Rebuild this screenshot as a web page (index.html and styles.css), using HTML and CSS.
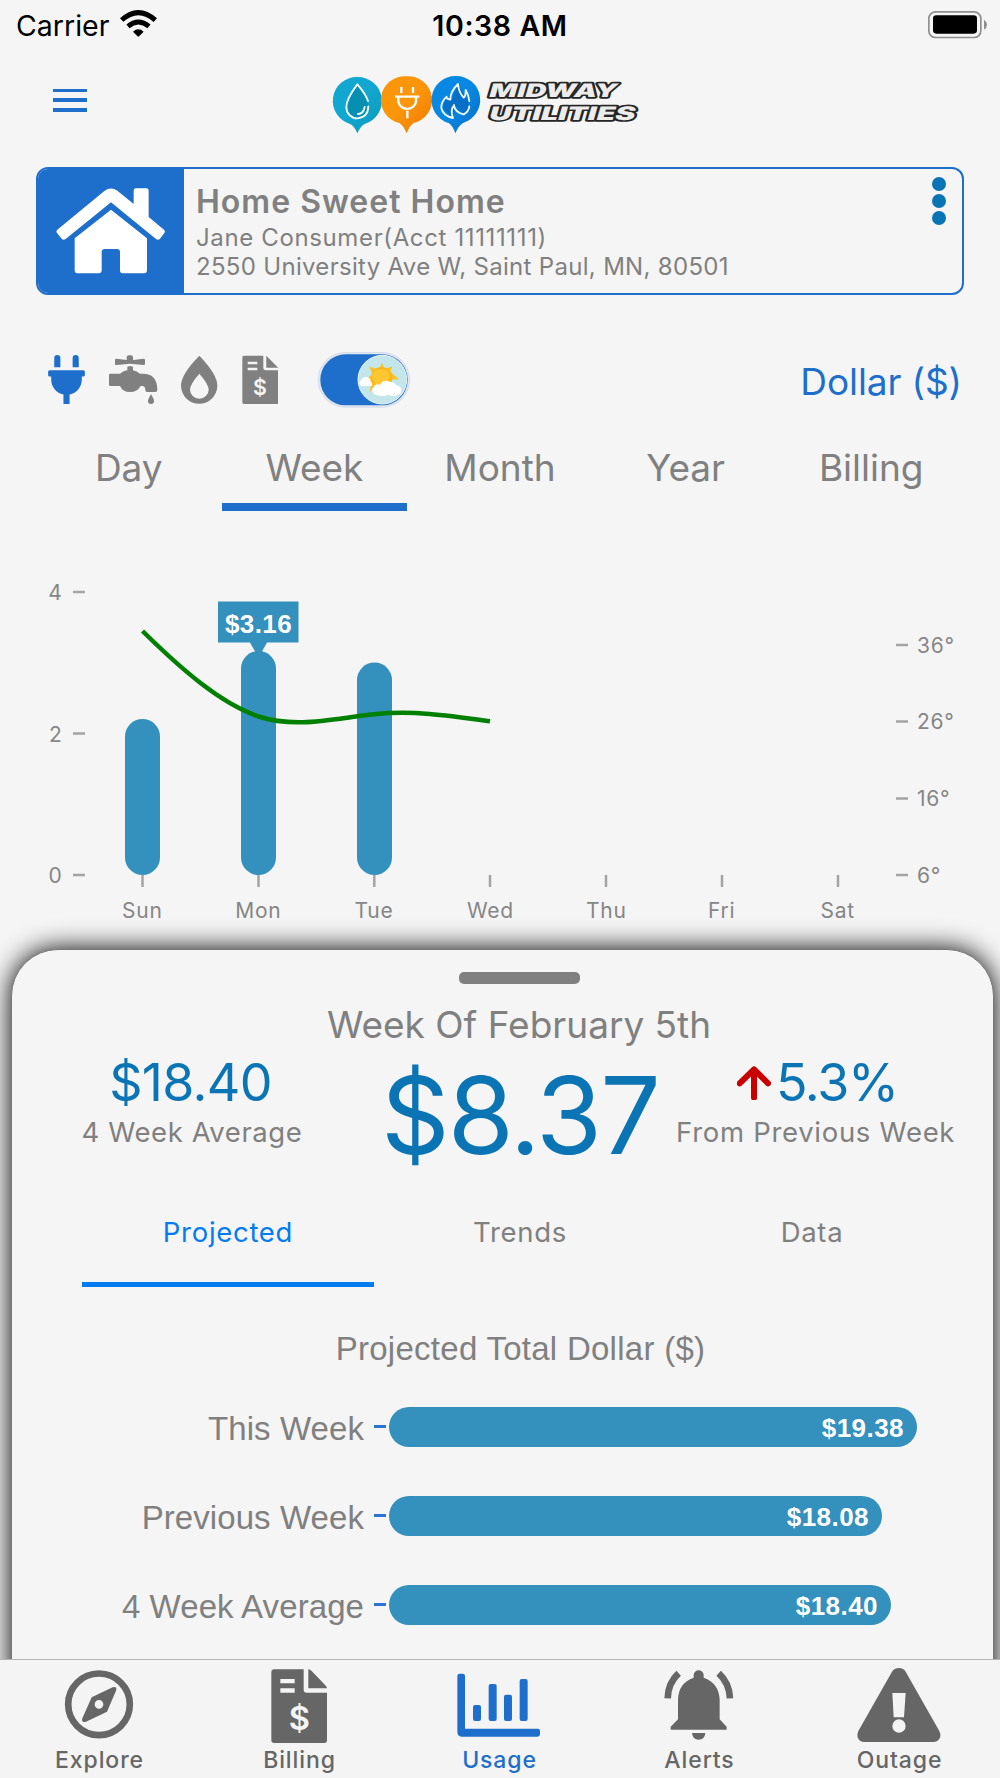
FILE: index.html
```html
<!DOCTYPE html>
<html lang="en">
<head>
<meta charset="utf-8">
<title>Usage</title>
<link rel="stylesheet" href="styles.css">
</head>
<body>
<div class="status">
  <div class="status-left"><span class="carrier">Carrier</span>
    <svg class="wifi" viewBox="360 28 112 86"><g fill="none" stroke="#000" stroke-width="15"><path d="M365 61Q415 16 466 61"/><path d="M384 80Q415 54 447 80"/></g><path d="M399 96Q415 82 431 96L418 109Q415 112 412 109Z"/></svg>
  </div>
  <span class="time">10:38 AM</span>
  <svg class="battery" viewBox="1284 32 180 84"><rect x="1286.500" y="34.500" width="156" height="77" rx="20" fill="none" stroke="#8e8e8e" stroke-width="5"/><rect x="1299" y="45" width="132" height="55" rx="10"/><path d="M1452 58Q1461 64 1461 73T1452 88Z" fill="#8e8e8e"/></svg>
</div>

<header class="header">
  <div class="burger"><i></i><i></i><i></i></div>
  <svg class="logo" viewBox="0 0 990 225">
    <defs>
      <linearGradient id="water" x1="0" y1="0" x2="1" y2="1"><stop offset=".5" stop-color="#12a7d0"/><stop offset="1" stop-color="#0a98b8"/></linearGradient>
      <linearGradient id="power" x1="0" y1="0" x2="1" y2="1"><stop offset=".5" stop-color="#fb950a"/><stop offset="1" stop-color="#f07800"/></linearGradient>
      <linearGradient id="gas" x1="0" y1="0" x2="1" y2="1"><stop offset=".5" stop-color="#0888e2"/><stop offset="1" stop-color="#056dc4"/></linearGradient>
    </defs>
    <path fill="url(#water)" d="M112 36A72 72 0 0 1 134 177Q122 183 112 205Q103 183 90 177A72 72 0 0 1 112 36Z"/>
    <path fill="url(#power)" d="M260 34A71 71 0 0 1 281 174Q270 180 260 205Q249 180 238 174A71 71 0 0 1 260 34Z"/>
    <path fill="url(#gas)" d="M407 33A72 72 0 0 1 429 174Q417 180 406 205Q397 180 386 174A72 72 0 0 1 407 33Z"/>
    <path fill="#078fb1" d="M112 60Q146 108 146 128L128 160H100Q80 150 80 126Q82 100 112 60Z"/>
    <path fill="#0670c8" d="M414 58L444 108L448 130L430 148L407 124L398 158L368 130L378 95L395 104Z"/>
    <g fill="none" stroke="#f0fafa" stroke-width="5.500" stroke-linecap="round" stroke-linejoin="round">
      <path d="M144 108Q138 88 112 58Q79 102 79 126A33 33 0 0 0 112 160Q144 158 145 124M114 147Q131 146 134 126"/>
      <path d="M448 108Q447 92 437 75Q438 93 431 98Q416 82 414 57Q390 80 391 104Q378 102 380 95Q362 112 364 130Q370 154 399 159Q390 136 402 120Q404 142 431 148Q446 140 448 124"/>
    </g>
    <path fill="none" stroke="#fff" stroke-width="7" d="M244 66V84M279 66V84M225 95H298M235 98V110A27 27 0 0 0 288 110V98M262 137V160"/>
    <g class="wordmark"><text transform="translate(504 95) skewX(-16)" textLength="383" lengthAdjust="spacingAndGlyphs">MIDWAY</text><text transform="translate(504 164) skewX(-16)" textLength="438" lengthAdjust="spacingAndGlyphs">UTILITIES</text></g>
  </svg>
</header>

<section class="account">
  <div class="account-icon">
    <svg class="house" viewBox="165 562 336 264" fill="#fff"><path d="M172 690L314 573Q333 560 352 573L401 613V573Q401 566 408 566H439Q446 566 446 573V652L492 690Q497 695 493 700L480 717Q475 723 468 718L333 608L197 718Q190 723 185 717L171 700Q167 695 172 690Z"/><path d="M333 630L441 716V812Q441 821 432 821H368Q360 821 360 812V757Q360 748 351 748H314Q305 748 305 757V812Q305 821 296 821H232Q224 821 224 812V716Z"/></svg>
  </div>
  <div class="account-text">
    <div class="acc-name">Home Sweet Home</div>
    <div class="acc-line acc-owner">Jane Consumer(Acct 11111111)</div>
    <div class="acc-line acc-address">2550 University Ave W, Saint Paul, MN, 80501</div>
  </div>
  <div class="kebab"><i></i><i></i><i></i></div>
</section>

<div class="tools">
  <svg class="tool plug" viewBox="0 0 384 512"><path d="M320,32a32,32,0,0,0-64,0v96h64Zm48,128H16A16,16,0,0,0,0,176v32a16,16,0,0,0,16,16H32v32A160.07,160.07,0,0,0,160,412.800V512h64V412.800A160.070,160.070,0,0,0,352,256V224h16a16,16,0,0,0,16-16V176A16,16,0,0,0,368,160ZM128,32a32,32,0,0,0-64,0v96h64Z"/></svg>
  <svg class="tool faucet" viewBox="237 45 147 147"><path d="M259 56L290 60V52Q290 46 296 46H303Q309 46 309 52V60L341 56Q345 56 345 60V71Q345 75 341 75L300 71L259 75Q255 75 255 71V60Q255 56 259 56ZM241 101H270Q280 92 292 91V80L300 78L309 80V91Q320 93 330 101H342Q382 103 382 150Q382 156 376 156H351Q346 156 346 150Q346 138 336 138H332Q322 156 300 156Q278 156 270 138H241Q237 138 237 134V105Q237 101 241 101ZM363 163Q372 177 372 183A9 9 0 0 1 354 183Q354 177 363 163Z"/></svg>
  <svg class="tool flame" viewBox="453 45 110 147"><path fill-rule="evenodd" d="M508 47Q562 103 562 137A54.500 54.500 0 0 1 453 137Q453 103 508 47ZM508 101Q480 133 480 149A28 27 0 0 0 536 149Q536 133 508 101Z"/></svg>
  <svg class="tool bill" viewBox="635 45 109 147"><path d="M641 47H699V84Q699 91 706 91H744V187Q744 192 739 192H641Q636 192 636 187V52Q636 47 641 47ZM708 47L744 83H708Z"/><path fill="#f4f4f4" d="M652 65H681V73H652ZM652 83H681V91H652Z"/><text class="bill-sign" x="689" y="165" font-size="64">$</text></svg>
  <svg class="toggle" viewBox="860 38 282 168">
    <rect x="863" y="39.500" width="275" height="164" rx="82" fill="#e4e6ea" stroke="#b9cfea" stroke-width="1.500"/>
    <rect x="870" y="45" width="262" height="153" rx="76" fill="#1d6fcb"/>
    <circle cx="1056" cy="121" r="73" fill="#c2e6ea" stroke="#eef3f6" stroke-width="3"/>
    <path fill="#f8c32a" d="M1055 70L1063 90L1086 81L1080 97L1106 120L1082 121L1090 140L1028 145L1017 160L1022 138L1003 120L1027 106L1017 82L1045 90Z"/>
    <circle cx="1054" cy="115" r="32" fill="#f8b81c"/><path fill="#fcc72f" d="M1028 98Q1058 78 1077 101Q1076 124 1074 138H1040Q1020 120 1028 98Z"/>
    <path fill="#fff" d="M995 140A9 9 0 0 1 992 123Q1000 108 1013 114Q1022 118 1021 128Q1028 130 1024 140ZM1036 166A14 14 0 0 1 1030 143Q1034 132 1048 136Q1061 118 1080 128Q1092 127 1098 138Q1112 139 1113 152Q1114 167 1100 168Q1085 173 1075 166Q1055 174 1036 166Z"/>
  </svg>
  <span class="unit">Dollar ($)</span>
</div>

<nav class="ranges">
  <span class="range">Day</span><span class="range active">Week</span><span class="range">Month</span><span class="range">Year</span><span class="range">Billing</span>
</nav>

<svg class="chart" viewBox="0 520 1000 429">
  <g stroke="#a4a4a4" stroke-width="2.500"><path d="M73 592H85M73 733.500H85M73 875H85M896 645H908M896 721.500H908M896 798.500H908M896 875H908M142.500 875V887M258.500 875V887M374.300 875V887M490 875V887M606 875V887M722 875V887M838 875V887"/></g>
  <g fill="#3490bd"><rect x="125" y="719" width="35" height="156" rx="17.500"/><rect x="241" y="651" width="35" height="224" rx="17.500"/><rect x="357" y="662.500" width="35" height="212.500" rx="17.500"/><path d="M218 601.500H298.500V642.500H267L260 655H257L250 642.500H218Z"/></g>
  <path fill="none" stroke="#008000" stroke-width="4.500" d="M142.500 631C181 669 220 703 258.500 716.500C297 729 336 718 374.300 714.300C413 710 452 716 490 721.300"/>
  <text class="tip" x="258.500" y="632.500">$3.16</text>
  <g class="axis">
    <g text-anchor="end"><text x="62.500" y="600">4</text><text x="62.500" y="741.500">2</text><text x="62.500" y="883">0</text></g>
    <text x="917" y="652.500">36°</text><text x="917" y="729">26°</text><text x="917" y="806">16°</text><text x="917" y="882.500">6°</text>
    <g text-anchor="middle"><text x="142.300" y="917.700">Sun</text><text x="258.300" y="917.700">Mon</text><text x="374" y="917.700">Tue</text><text x="490.300" y="917.700">Wed</text><text x="606.300" y="917.700">Thu</text><text x="721.700" y="917.700">Fri</text><text x="837.700" y="917.700">Sat</text></g>
  </g>
</svg>

<section class="sheet">
  <div class="handle"></div>
  <h2 class="sheet-title">Week Of February 5th</h2>
  <div class="stats">
    <div class="stat"><div class="stat-value avg">$18.40</div><div class="stat-label">4 Week Average</div></div>
    <div class="stat-big">$8.37</div>
    <div class="stat"><div class="stat-value change"><svg class="arrow" viewBox="710 433 101 104"><path d="M761 528V446M718 485L761 443L803 485" fill="none" stroke="#c80000" stroke-width="18" stroke-linecap="round" stroke-linejoin="round"/></svg><span class="pct">5.3%</span></div><div class="stat-label prev">From Previous Week</div></div>
  </div>
  <nav class="tabs"><span class="tab on">Projected</span><span class="tab">Trends</span><span class="tab">Data</span></nav>
  <h3 class="proj-title">Projected Total Dollar ($)</h3>
  <div class="bars">
    <div class="bar-row"><span class="bar-name">This Week</span><i class="tick"></i><div class="bar" style="width:528px">$19.38</div></div>
    <div class="bar-row"><span class="bar-name">Previous Week</span><i class="tick"></i><div class="bar" style="width:493px">$18.08</div></div>
    <div class="bar-row"><span class="bar-name">4 Week Average</span><i class="tick"></i><div class="bar" style="width:502px">$18.40</div></div>
  </div>
</section>

<footer class="tabbar">
  <div class="item"><svg viewBox="150 63 300 250"><circle cx="297" cy="193" r="92.500" fill="none" stroke="#666" stroke-width="20"/><path fill="#666" fill-rule="evenodd" d="M275 172L338 142Q353 138 348 152L321 215L258 245Q243 249 247 235ZM297 180A13 13 0 1 0 297 206A13 13 0 1 0 297 180Z"/></svg><span>Explore</span></div>
  <div class="item"><svg viewBox="750 63 300 250"><path fill="#666" d="M823 88H911V149Q911 158 920 158H981V301Q981 309 973 309H823Q814 309 814 301V96Q814 88 823 88ZM925 88Q931 88 935 93L976 136Q981 140 981 145H925Z"/><path fill="#f4f4f4" d="M841 117H884V130H841ZM841 145H884V158H841Z"/><text class="bill-sign" x="898" y="269" font-size="98">$</text></svg><span>Billing</span></div>
  <div class="item on"><svg viewBox="1350 63 300 250" fill="#1d6fcb"><path d="M1379 101H1388Q1395 101 1395 108V266H1614Q1620 266 1620 273V283Q1620 290 1613 290H1387Q1372 290 1372 275V108Q1372 101 1379 101Z"/><rect x="1419" y="195" width="24" height="48" rx="6"/><rect x="1466" y="132" width="24" height="111" rx="6"/><rect x="1512" y="164" width="24" height="79" rx="6"/><rect x="1559" y="117" width="24" height="126" rx="6"/></svg><span>Usage</span></div>
  <div class="item"><svg viewBox="450 63 300 250" fill="#666"><path d="M581 113V106A15 15 0 0 1 611 106V113Q658 130 659 180V238L680 260V269H512V260L534 238V180Q534 130 581 113ZM576 279H616Q614 299 596 299T576 279Z"/><path d="M503 175Q504 129 536 100M690 175Q688 129 656 100" fill="none" stroke="#666" stroke-width="20"/></svg><span>Alerts</span></div>
  <div class="item"><svg viewBox="1050 63 300 250"><path fill="#666" fill-rule="evenodd" d="M1176 95Q1183 84 1197 84T1217 95L1318 273Q1325 289 1317 298Q1312 306 1300 306H1093Q1081 306 1076 298Q1069 289 1075 273ZM1177 159L1181 232H1212L1217 159ZM1197 238A20 20 0 1 0 1197 278A20 20 0 1 0 1197 238Z"/></svg><span>Outage</span></div>
</footer>
</body>
</html>
```
FILE: styles.css
```css
* { box-sizing: border-box; }
body { margin: 0; width: 1000px; height: 1778px; overflow: hidden; background: #f5f5f5; color: #808080; font-family: Inter, "Liberation Sans", sans-serif; display: flex; flex-direction: column; white-space: nowrap; }
svg { display: block; flex: none; }
h2, h3 { margin: 0; font-weight: 400; }

.status { height: 50px; padding: 0 12px; color: #000; display: grid; grid-template-columns: 1fr auto 1fr; align-items: center; font-size: 28.5px; }
.status-left { display: flex; align-items: center; gap: 11px; height: 50px; padding-left: 4px; }
.wifi { width: 37.3px; height: 28.7px; margin-top: -3px; }
.time { font-weight: 600; letter-spacing: .6px; }
.battery { width: 60px; height: 28px; justify-self: end; margin-top: -1px; }

.header { height: 116.500px; padding: 15px 0 0 53px; display: flex; align-items: flex-start; }
.burger { width: 34px; padding-top: 23.500px; display: grid; gap: 6px; }
.burger i { height: 3.700px; background: #1d6fcb; }
.logo { width: 330px; height: 75px; margin-left: 233px; }
.wordmark text { font: 900 56px Inter, sans-serif; fill: #ececec; stroke: #262626; stroke-width: 10px; paint-order: stroke; stroke-linejoin: round; }

.account { height: 128.500px; margin: 0 36px; border: 2px solid #1d6fcb; border-radius: 12px; display: flex; overflow: hidden; }
.account-icon { width: 146px; background: #1d6fcb; padding: 18.500px 0 0 17px; }
.house { width: 112px; height: 88px; }
.account-text { padding: 14.500px 0 0 12px; flex: 1; }
.acc-name { font-size: 32px; font-weight: 600; line-height: 38px; letter-spacing: 1px; }
.acc-line { font-size: 24px; line-height: 29px; }
.acc-owner { margin-top: 2px; letter-spacing: .63px; }
.acc-address { letter-spacing: .31px; }
.kebab { padding: 8px 16px 0 0; display: flex; flex-direction: column; gap: 3px; }
.kebab i { width: 14px; height: 14px; border-radius: 50%; background: #0b74b5; }

.tools { height: 113px; padding: 57px 38px 0 48px; display: flex; align-items: flex-start; }
.tool { fill: #808080; margin-top: 3px; height: 49px; }
.plug { width: 37px; fill: #1d6fcb; }
.faucet { width: 49px; margin-left: 24px; }
.flame { width: 36.700px; margin-left: 23px; }
.bill { width: 36.300px; margin-left: 24px; }
.bill-sign { fill: #f4f4f4; font-family: Inter, sans-serif; font-weight: 600; text-anchor: middle; }
.toggle { width: 94px; height: 56px; margin-left: 39px; }
.unit { margin-left: auto; color: #1d6fcb; font-size: 37px; letter-spacing: -.1px; line-height: 60px; }

.ranges { flex: none; height: 103px; padding: 0 36px; display: grid; grid-template-columns: repeat(5, 1fr); text-align: center; font-size: 37px; }
.range { line-height: 60px; padding-top: 29.500px; }
.range.active { border-bottom: 8px solid #1d6fcb; }
.chart { width: 1000px; height: 429px; margin-top: 9px; }
.axis { fill: #868686; font-size: 21px; letter-spacing: .7px; }
.tip { font: 700 26px "Liberation Sans", sans-serif; letter-spacing: .4px; fill: #fff; text-anchor: middle; }

.sheet { flex: none; height: 800px; margin: 0 6px 0 11px; border: 1px solid #777; border-radius: 47px 47px 0 0; background: #f5f5f5; box-shadow: 0 0 27px #000; padding-top: 22px; }
.handle { width: 121px; height: 12px; margin-left: 447px; border-radius: 5px; background: #808080; }
.sheet-title { font-size: 37px; line-height: 50px; margin-top: 16px; padding-left: 33px; text-align: center; }
.stats { height: 155px; display: grid; grid-template-columns: 344px 312px 279px; padding-left: 8px; text-align: center; }
.stat-value { font-size: 52px; line-height: 60px; letter-spacing: -.7px; color: #0b74b5; display: flex; justify-content: center; align-items: center; padding-top: 3px; }
.stat-value.avg { padding-right: 3px; }
.stat-value.change { padding-left: 4px; letter-spacing: -1.3px; }
.stat-label { font-size: 27.500px; line-height: 39px; letter-spacing: .57px; }
.stat-label.prev { letter-spacing: .7px; }
.stat-big { font-size: 107px; line-height: 131px; letter-spacing: -1.8px; color: #0b74b5; }
.arrow { width: 33.700px; height: 34.700px; margin-right: 5px; }
.tabs { height: 82px; margin: 0 36px 0 70px; display: grid; grid-template-columns: repeat(3, 292px); text-align: center; font-size: 27.500px; letter-spacing: .7px; line-height: 54px; }
.tab.on { color: #047cf0; border-bottom: 5px solid #047cf0; }
.proj-title { font: 33px/40px "Liberation Sans", sans-serif; letter-spacing: .27px; text-align: center; padding-left: 36px; margin-top: 42px; }
.bars { margin-top: 37.500px; display: grid; gap: 49px; font-family: "Liberation Sans", sans-serif; }
.bar-row { height: 40px; display: flex; align-items: center; }
.bar-name { width: 352px; text-align: right; font-size: 33px; letter-spacing: .08px; padding-top: 4px; }
.tick { width: 12px; height: 2.500px; background: #2a75d2; margin: 0 3px 0 10px; }
.bar { height: 40px; border-radius: 20px; background: #3490bd; color: #fff; font-size: 26px; letter-spacing: .45px; font-weight: 700; line-height: 42px; text-align: right; padding-right: 13px; }

.tabbar { position: fixed; left: 0; top: 1659px; width: 1000px; height: 119px; background: #f4f4f4; border-top: 1.500px solid #b5b5b5; display: grid; grid-template-columns: repeat(5, 1fr); color: #666; font-size: 23px; font-weight: 500; text-align: center; }
.item { padding-top: 1px; }
.item svg { width: 100px; height: 83.300px; margin: 0 auto; }
.item span { display: block; line-height: 32px; letter-spacing: .9px; padding-right: 1px; }
.item.on { color: #1d6fcb; }
```
